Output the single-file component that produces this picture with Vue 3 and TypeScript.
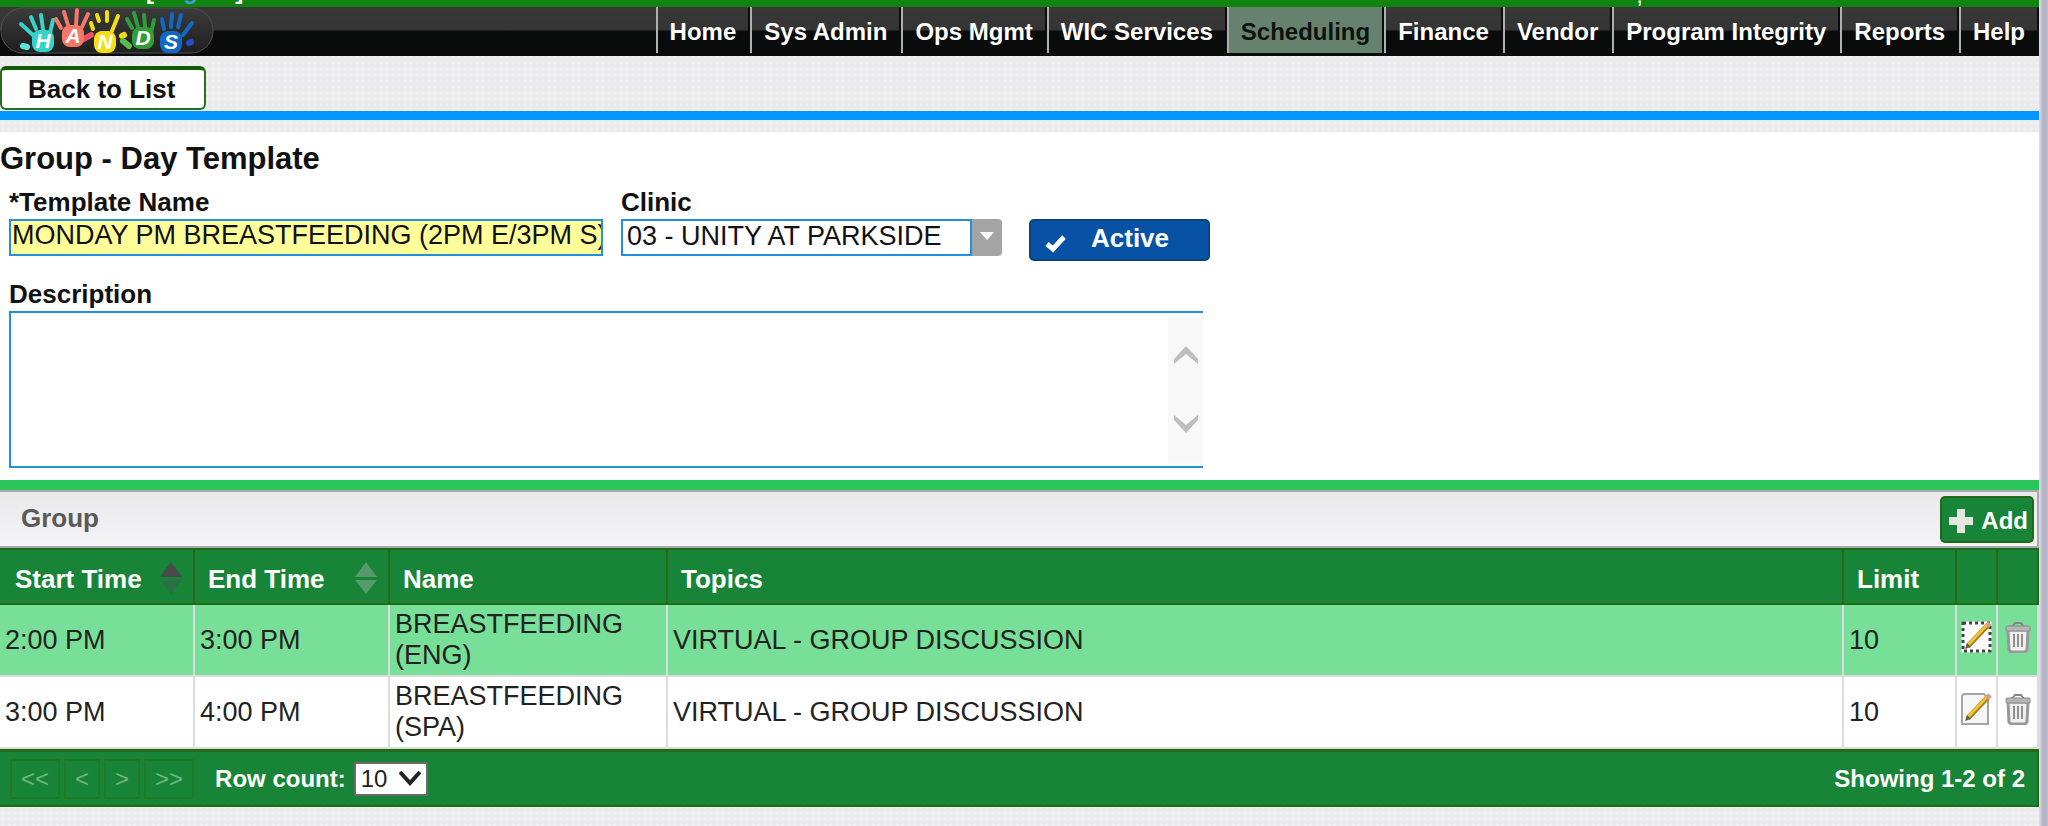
<script setup lang="ts">
import { ref } from 'vue'

interface GroupRow {
  start: string
  end: string
  name: string
  topics: string
  limit: number
  selected: boolean
}

interface Hand {
  letter: string
  color: string
  x: number
  y: number
  fingers: string
  thumb: string
  thumbColor: string
}

const menu = ['Home', 'Sys Admin', 'Ops Mgmt', 'WIC Services', 'Scheduling', 'Finance', 'Vendor', 'Program Integrity', 'Reports', 'Help']
const current = 'Scheduling'

const templateName = ref('MONDAY PM BREASTFEEDING (2PM E/3PM S)')
const clinic = ref('03 - UNITY AT PARKSIDE')
const description = ref('')
const rowCount = ref('10')

const rows: GroupRow[] = [
  { start: '2:00 PM', end: '3:00 PM', name: 'BREASTFEEDING (ENG)', topics: 'VIRTUAL - GROUP DISCUSSION', limit: 10, selected: true },
  { start: '3:00 PM', end: '4:00 PM', name: 'BREASTFEEDING (SPA)', topics: 'VIRTUAL - GROUP DISCUSSION', limit: 10, selected: false },
]

const pages = ['<<', '<', '>', '>>']

const hands: Hand[] = [
  { letter: 'H', color: '#35d3c8', x: 43, y: 34, fingers: 'M21 17L33 28M31 10L36 22M41 8L43 22M53 13L50 26', thumb: 'M23 39L27 40', thumbColor: '#55e6dc' },
  { letter: 'A', color: '#f4786a', x: 73, y: 29, fingers: 'M56 12L61 21M64 5L68 18M77 3L76 18M88 7L82 20', thumb: 'M91 28L82 33', thumbColor: '#ee4f62' },
  { letter: 'N', color: '#f5dd16', x: 105, y: 35, fingers: 'M91 16L93 22M97 8L99 14M107 5L107 14M118 9L112 24', thumb: 'M122 29L124 28', thumbColor: '#f5dd16' },
  { letter: 'D', color: '#2f9e38', x: 143, y: 31, fingers: 'M127 12L132 21M134 6L138 20M144 8L145 20M154 13L151 26', thumb: 'M123 34L129 39', thumbColor: '#58bb4c' },
  { letter: 'S', color: '#1269c4', x: 171, y: 35, fingers: 'M162 12L164 22M172 7L171 20M181 8L178 20M192 16L183 28', thumb: 'M189 36L191 35', thumbColor: '#2350c8' },
]
</script>

<template>
  <div class="window">
    <div class="page">
      <div class="userbar">
        <span class="session">[<a href="#">Logout</a>]</span>
        <span class="date">,</span>
      </div>

      <header class="masthead">
        <svg class="logo" width="216" height="48" viewBox="0 0 216 48" role="img" aria-label="Hands">
          <defs>
            <linearGradient id="pill" x1="0" y1="0" x2="0" y2="1">
              <stop offset="0" stop-color="#3b3b3b" />
              <stop offset="1" stop-color="#1f1f1f" />
            </linearGradient>
          </defs>
          <rect x="1" y="1" width="212" height="45" rx="22" fill="url(#pill)" stroke="#505050" />
          <g v-for="h in hands" :key="h.letter">
            <path :d="h.fingers" :stroke="h.color" stroke-width="4" stroke-linecap="round" fill="none" />
            <path :d="h.thumb" :stroke="h.thumbColor" stroke-width="6" stroke-linecap="round" fill="none" />
            <rect :x="h.x - 11" :y="h.y - 11" width="22" height="22" rx="8" :fill="h.color" />
            <text :x="h.x" :y="h.y + 7" class="letter">{{ h.letter }}</text>
          </g>
        </svg>
        <nav class="menu">
          <a v-for="item in menu" :key="item" href="#" :class="{ current: item === current }">{{ item }}</a>
        </nav>
      </header>

      <div class="toolbar">
        <button type="button" class="back">Back to List</button>
      </div>

      <main class="form">
        <h1>Group - Day Template</h1>
        <div class="fields">
          <div class="field name">
            <label for="template-name">*Template Name</label>
            <input id="template-name" v-model="templateName" type="text" />
          </div>
          <div class="field clinic">
            <label for="clinic">Clinic</label>
            <div class="combo">
              <select id="clinic" v-model="clinic">
                <option>03 - UNITY AT PARKSIDE</option>
              </select>
              <span class="drop">
                <svg width="14" height="10" viewBox="0 0 14 10"><path d="M0 1H14L7 9Z" fill="#fff" /></svg>
              </span>
            </div>
          </div>
          <button type="button" class="active">
            <svg width="22" height="20" viewBox="0 0 22 20"><path d="M2 10L8 15L19 3" fill="none" stroke="#fff" stroke-width="5" /></svg>
            <span>Active</span>
          </button>
        </div>
        <div class="field notes">
          <label for="description">Description</label>
          <div class="area">
            <textarea id="description" v-model="description"></textarea>
            <div class="scroller">
              <svg width="24" height="18" viewBox="0 0 24 18"><path d="M0 13L12 0L24 13V18L12 8L0 18Z" fill="#bebebe" /></svg>
              <svg width="24" height="18" viewBox="0 0 24 18"><path d="M0 5L12 18L24 5V0L12 10L0 0Z" fill="#bebebe" /></svg>
            </div>
          </div>
        </div>
      </main>

      <section class="group">
        <div class="caption">
          <h2>Group</h2>
          <button type="button" class="add">
            <svg width="24" height="24" viewBox="0 0 24 24"><path d="M8 0H16V8H24V16H16V24H8V16H0V8H8Z" fill="#e4e6e0" /></svg>
            <span>Add</span>
          </button>
        </div>

        <table>
          <colgroup>
            <col class="time" />
            <col class="time" />
            <col class="title" />
            <col />
            <col class="limit" />
            <col class="icon" />
            <col class="icon" />
          </colgroup>
          <thead>
            <tr>
              <th>
                <div class="sort">
                  Start Time
                  <svg width="24" height="32" viewBox="0 0 24 32"><path d="M12 0L23 15H1Z" fill="#4a4a4a" /><path d="M1 18H23L12 32Z" fill="#2b7040" /></svg>
                </div>
              </th>
              <th>
                <div class="sort">
                  End Time
                  <svg width="24" height="32" viewBox="0 0 24 32"><path d="M12 0L23 15H1Z" fill="#56996a" /><path d="M1 18H23L12 32Z" fill="#56996a" /></svg>
                </div>
              </th>
              <th>Name</th>
              <th>Topics</th>
              <th>Limit</th>
              <th></th>
              <th></th>
            </tr>
          </thead>
          <tbody>
            <tr v-for="row in rows" :key="row.start" :class="{ selected: row.selected }">
              <td>{{ row.start }}</td>
              <td>{{ row.end }}</td>
              <td>{{ row.name }}</td>
              <td>{{ row.topics }}</td>
              <td>{{ row.limit }}</td>
              <td class="tool">
                <button type="button" aria-label="Edit">
                  <svg width="32" height="34" viewBox="0 0 32 34">
                    <rect v-if="row.selected" x="2" y="3" width="27" height="28" fill="#fbfbfb" stroke="#fff" stroke-width="3" />
                    <rect v-if="row.selected" x="2" y="3" width="27" height="28" fill="none" stroke="#444" stroke-width="3" stroke-dasharray="3 3" />
                    <path v-else d="M3 2H23L27 6V32H1V4Z" fill="#f6f6f6" stroke="#a5a5a5" stroke-width="2" />
                    <path d="M7 26L27 5" stroke="#a77a1c" stroke-width="5" />
                    <path d="M7 25L27 4" stroke="#f0c337" stroke-width="3" />
                    <path d="M4 29L6 23L10 27Z" fill="#6b5a45" />
                    <path d="M26 6L29 3" stroke="#d8a08c" stroke-width="5" />
                  </svg>
                </button>
              </td>
              <td class="tool">
                <button type="button" aria-label="Delete">
                  <svg width="26" height="32" viewBox="0 0 26 32">
                    <path d="M7 6L10 2H16L19 6" fill="none" stroke="#858585" stroke-width="2" />
                    <path d="M3 9H23L22 29L20 31H6L4 29Z" fill="#efefef" stroke="#999" stroke-width="3" />
                    <rect x="1" y="5" width="24" height="5" rx="1" fill="#b5b5b5" stroke="#8a8a8a" />
                    <path d="M9 13V26M13 13V26M17 13V26" stroke="#8f8f8f" stroke-width="2" />
                  </svg>
                </button>
              </td>
            </tr>
          </tbody>
        </table>

        <footer class="pager">
          <div class="pages">
            <button v-for="p in pages" :key="p" type="button" disabled>{{ p }}</button>
          </div>
          <label for="row-count">Row count:</label>
          <div class="count">
            <select id="row-count" v-model="rowCount">
              <option>10</option>
            </select>
            <svg width="22" height="16" viewBox="0 0 22 16"><path d="M1 1L11 12L21 1" fill="none" stroke="#222" stroke-width="4" /></svg>
          </div>
          <span class="showing">Showing 1-2 of 2</span>
        </footer>
      </section>
    </div>
    <div class="edge"></div>
  </div>
</template>

<style>
body {
  margin: 0;
}
</style>

<style scoped>
* {
  box-sizing: border-box;
}

.window {
  display: flex;
  min-height: 100vh;
  font-family: "Liberation Sans", Arial, sans-serif;
  font-size: 26px;
  line-height: 30px;
  color: #111;
  background-color: #ebebed;
  background-image: radial-gradient(circle at 3px 3px, #f1f1f2 1px, transparent 2px);
  background-size: 6px 6px;
}

.page {
  flex: 1;
  min-width: 0;
}

.edge {
  flex: 0 0 9px;
  background: linear-gradient(to right, #e2e1ea, #b4b1c4 4px, #bcb9cb);
}

button,
input,
select,
textarea {
  margin: 0;
  font-family: inherit;
  color: inherit;
}

.userbar {
  display: flex;
  justify-content: space-between;
  align-items: flex-end;
  height: 7px;
  padding: 0 396px 0 146px;
  overflow: hidden;
  background: #0f8510;
  color: #fff;
  font-size: 24px;
  line-height: 28px;
  font-weight: bold;
}

.userbar .session {
  margin-bottom: 2px;
}

.userbar a {
  color: #4a97dc;
  text-decoration: none;
}

.userbar .date {
  margin-bottom: -2px;
  font-weight: normal;
}

.masthead {
  display: flex;
  justify-content: space-between;
  height: 49px;
  background: linear-gradient(#383838 0, #343434 23px, #0a0c0b 24px, #0a0c0b 100%);
}

.logo {
  flex: none;
}

.letter {
  font-family: "Liberation Sans", Arial, sans-serif;
  font-size: 21px;
  font-weight: bold;
  font-style: italic;
  fill: #fff;
  text-anchor: middle;
}

.menu {
  display: flex;
  height: 46px;
}

.menu a {
  padding: 0 12px;
  border-left: 2px solid #b0b0b0;
  border-right: 2px solid #0c0c0c;
  color: #fff;
  font-size: 24px;
  font-weight: bold;
  line-height: 50px;
  white-space: nowrap;
  text-decoration: none;
}

.menu a.current {
  background: #66826f;
  color: #0d120f;
}

.toolbar {
  height: 64px;
  padding-top: 10px;
  border-bottom: 9px solid #0298ff;
}

.back {
  display: block;
  height: 44px;
  padding: 0 29px 0 26px;
  border: 2px solid #24701c;
  border-top: 4px solid #125c08;
  border-radius: 6px;
  background: #fff;
  font-size: 26px;
  font-weight: bold;
}

.form {
  margin-top: 12px;
  padding: 10px 0 12px;
  background: #fff;
}

h1 {
  margin: 0;
  font-size: 31px;
  line-height: 34px;
}

.fields {
  display: flex;
  align-items: flex-start;
  padding: 11px 9px 0;
}

.field label {
  display: block;
  padding-bottom: 2px;
  font-weight: bold;
}

.name {
  width: 594px;
  margin-right: 18px;
}

.name input {
  display: block;
  width: 100%;
  height: 37px;
  padding: 0 0 4px 1px;
  border: 2px solid #2490dc;
  border-radius: 0;
  background: #ffff99;
  font-size: 27px;
}

.clinic {
  width: 381px;
  margin-right: 27px;
}

.combo {
  display: flex;
}

.combo select {
  flex: 1;
  height: 37px;
  padding: 0 0 4px 4px;
  border: 2px solid #2490dc;
  border-radius: 0;
  appearance: none;
  background: #fff;
  font-size: 27px;
}

.drop {
  display: flex;
  align-items: center;
  justify-content: center;
  width: 30px;
  padding-bottom: 4px;
  border-radius: 0 4px 4px 0;
  background: #a4a4a4;
}

.active {
  display: flex;
  align-items: center;
  gap: 24px;
  width: 181px;
  height: 42px;
  margin-top: 32px;
  padding: 0 14px;
  border: 2px solid #0a4478;
  border-radius: 5px;
  background: #0852a6;
  color: #fff;
  font-size: 26px;
  font-weight: bold;
}

.active svg {
  margin-top: 8px;
}

.active span {
  margin-bottom: 3px;
}

.notes {
  width: 1194px;
  margin: 18px 0 0 9px;
}

.area {
  display: flex;
  border: 2px solid #2490dc;
  border-right: 0;
}

.area textarea {
  flex: 1;
  height: 153px;
  padding: 4px;
  border: 0;
  background: #fff;
  font-size: 27px;
  resize: none;
  overflow: hidden;
}

.scroller {
  display: flex;
  flex-direction: column;
  justify-content: center;
  align-items: center;
  gap: 51px;
  width: 35px;
  margin: 3px 0;
  background: #f8f8f8;
}

.group {
  border-top: 10px solid #2bc65a;
}

.caption {
  display: flex;
  justify-content: space-between;
  align-items: center;
  height: 58px;
  padding: 1px 3px 0 21px;
  border: 2px solid #a9a8b3;
  border-left: 0;
  background: linear-gradient(#e9e9eb, #f4f4f6);
}

h2 {
  margin: 0 0 4px;
  color: #5a5a5a;
  font-size: 26px;
  line-height: 30px;
}

.add {
  display: flex;
  align-items: center;
  gap: 8px;
  height: 47px;
  padding: 2px 4px 0 7px;
  border: 2px solid #1f6a18;
  border-radius: 5px;
  background: #178437;
  color: #fff;
  font-size: 24px;
  font-weight: bold;
}

table {
  width: 100%;
  table-layout: fixed;
  border-collapse: separate;
  border-spacing: 0;
}

.time {
  width: 195px;
}

.title {
  width: 278px;
}

.limit {
  width: 113px;
}

.icon {
  width: 41px;
}

th {
  height: 57px;
  padding: 4px 10px 0 13px;
  border: solid #236a14;
  border-width: 2px 2px 2px 0;
  background: #178437;
  color: #fff;
  text-align: left;
  white-space: nowrap;
}

th:first-child {
  padding-left: 15px;
}

.sort {
  display: flex;
  align-items: center;
  justify-content: space-between;
}

.sort svg {
  margin-bottom: 2px;
}

td {
  height: 72px;
  padding: 2px 4px 2px 5px;
  border: solid #dcdcdc;
  border-width: 0 2px 2px 0;
  background: #fff;
  color: #222;
  font-size: 27px;
  line-height: 31px;
}

.selected td {
  background: #77df97;
}

.tool {
  padding: 0;
  text-align: center;
}

.tool button {
  display: inline-flex;
  padding: 0;
  border: 0;
  background: none;
}

.pager {
  display: flex;
  align-items: center;
  height: 58px;
  padding: 0 12px 0 10px;
  border: solid #236a14;
  border-width: 3px 2px 2px 0;
  background: #178437;
  color: #fff;
  font-size: 24px;
  font-weight: bold;
}

.pages {
  display: flex;
  gap: 4px;
  margin-right: 21px;
}

.pages button {
  height: 40px;
  padding: 0 9px;
  border: 2px solid #1f7a26;
  background: #178437;
  color: #6db583;
  font-size: 24px;
}

.count {
  display: flex;
  align-items: center;
  width: 74px;
  height: 34px;
  margin-left: 8px;
  border: 2px solid #6a6a6a;
  background: #fff;
}

.count select {
  flex: 1;
  min-width: 0;
  height: 30px;
  padding: 0 0 0 5px;
  border: 0;
  appearance: none;
  background: #fff;
  color: #222;
  font-size: 24px;
}

.count svg {
  flex: none;
  margin-right: 5px;
}

.showing {
  margin-left: auto;
}
</style>
